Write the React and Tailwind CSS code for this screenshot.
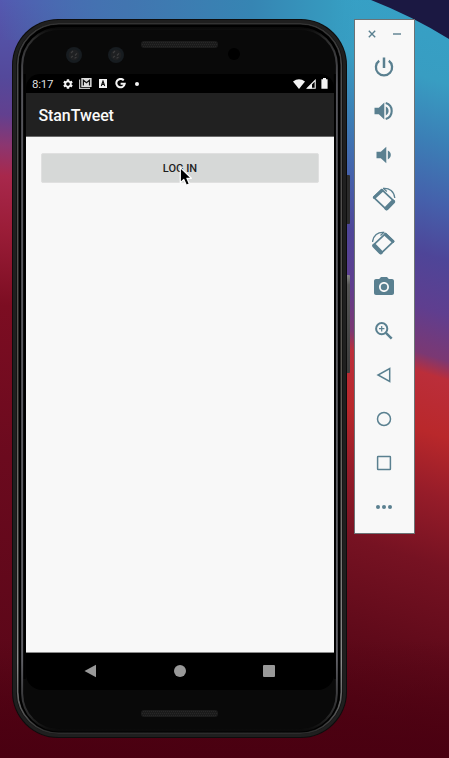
import React from "react";
import { MdSettings, MdPhotoCamera } from "react-icons/md";

function Wallpaper() {
  return (
    <svg className="absolute inset-0" width="449" height="758" viewBox="0 0 449 758">
      <defs>
        <linearGradient id="wl" gradientUnits="userSpaceOnUse" x1="0" y1="0" x2="-60" y2="758">
          <stop offset="0" stopColor="#5459b0" />
          <stop offset="0.1" stopColor="#54499b" />
          <stop offset="0.15" stopColor="#62408f" />
          <stop offset="0.19" stopColor="#8c3670" />
          <stop offset="0.23" stopColor="#a8284c" />
          <stop offset="0.3" stopColor="#9b1d38" />
          <stop offset="0.4" stopColor="#7c0d22" />
          <stop offset="0.6" stopColor="#6b0a1e" />
          <stop offset="0.86" stopColor="#5c0719" />
          <stop offset="1" stopColor="#4c0111" />
        </linearGradient>
        <linearGradient id="wr" gradientUnits="userSpaceOnUse" x1="449" y1="0" x2="229" y2="700">
          <stop offset="0" stopColor="#36a1c6" />
          <stop offset="0.11" stopColor="#389dc2" />
          <stop offset="0.19" stopColor="#3b7fb6" />
          <stop offset="0.27" stopColor="#4560ab" />
          <stop offset="0.34" stopColor="#4e4598" />
          <stop offset="0.41" stopColor="#5f3e8f" />
          <stop offset="0.47" stopColor="#7b3873" />
          <stop offset="0.495" stopColor="#bb2e3a" />
          <stop offset="0.57" stopColor="#b9282b" />
          <stop offset="0.65" stopColor="#961c29" />
          <stop offset="0.74" stopColor="#761222" />
          <stop offset="0.86" stopColor="#600a1a" />
          <stop offset="1" stopColor="#4c0212" />
        </linearGradient>
        <linearGradient id="wt" x1="0" y1="0" x2="1" y2="0">
          <stop offset="0" stopColor="#3787b5" stopOpacity="0" />
          <stop offset="0.35" stopColor="#4275b0" />
          <stop offset="0.7" stopColor="#3685b3" />
          <stop offset="0.92" stopColor="#369abf" />
          <stop offset="1" stopColor="#369fc4" stopOpacity="0" />
        </linearGradient>
        <linearGradient id="wb" x1="0" y1="0" x2="0" y2="1">
          <stop offset="0" stopColor="#4c0211" stopOpacity="0" />
          <stop offset="1" stopColor="#4a0011" />
        </linearGradient>
      </defs>
      <rect width="180" height="758" fill="url(#wl)" />
      <rect x="180" width="269" height="758" fill="url(#wr)" />
      <rect width="360" height="40" fill="url(#wt)" />
      <rect y="640" width="449" height="118" fill="url(#wb)" />
      <path d="M371 0Q412 16 449 39V0Z" fill="#1b1842" />
    </svg>
  );
}

function Bezel() {
  return (
    <svg className="absolute inset-0" width="335" height="719" viewBox="0 0 335 719" fill="none">
      <defs>
        <linearGradient id="bz1" x1="0" y1="0" x2="0" y2="1">
          <stop offset="0" stopColor="#333333" />
          <stop offset="0.08" stopColor="#4b4b4d" />
          <stop offset="0.5" stopColor="#57544f" />
          <stop offset="0.9" stopColor="#8a8a8a" />
          <stop offset="0.97" stopColor="#555555" />
          <stop offset="1" stopColor="#2c2c2c" />
        </linearGradient>
        <linearGradient id="bz2" x1="0" y1="0" x2="0" y2="1">
          <stop offset="0" stopColor="#0a0a0a" />
          <stop offset="0.015" stopColor="#2c2c2c" />
          <stop offset="0.08" stopColor="#55555b" />
          <stop offset="0.9" stopColor="#606066" />
          <stop offset="0.98" stopColor="#262626" />
          <stop offset="1" stopColor="#0a0a0a" />
        </linearGradient>
      </defs>
      <rect x="2.5" y="2.5" width="330" height="714" rx="44" stroke="#1f1f1f" strokeWidth="3" />
      <rect x="5.7" y="4.7" width="323.6" height="709.6" rx="41" stroke="url(#bz1)" strokeWidth="1.6" />
      <rect x="8" y="7" width="319" height="705" rx="39" stroke="#000" strokeWidth="2.4" />
      <rect x="10.2" y="9.4" width="314.6" height="702" rx="37" stroke="url(#bz2)" strokeWidth="2" />
      <rect x="11.5" y="11" width="312" height="699" rx="36" fill="#090909" />
      <path d="M12.7 55V660M322.8 55V660" stroke="#000" strokeWidth="2" />
    </svg>
  );
}

function Lens() {
  return (
    <svg width="16" height="16" viewBox="0 0 16 16">
      <circle cx="8" cy="8" r="8" fill="#171c20" />
      <circle cx="8" cy="8" r="5.4" fill="#1f2022" />
      <path d="M5 6l2-2M9 8.5l2-2.2M5 10.5l2-1.5M8.5 11.3l2-1" stroke="#3d3d3e" strokeWidth="1.2" />
    </svg>
  );
}

function Grille() {
  return (
    <div className="flex h-[7px] w-[77px] items-center justify-center overflow-hidden rounded-[3px] bg-[#1b1b1b]">
      <svg width="77" height="7" viewBox="0 0 77 7">
        <path d="M2 1.5H75M1 3.5H76M2 5.5H75" stroke="#272727" strokeWidth="1" strokeDasharray="1 1" />
      </svg>
    </div>
  );
}

function StatusBar() {
  return (
    <div className="flex h-[19px] items-center rounded-t-[14px] bg-black pl-[6px] pr-[6px] text-[#f4f4f4]">
      <span className="w-[30px] pt-[1px] text-[11.5px] leading-[18px] tracking-[-0.2px] text-[#dedede]">8:17</span>
      <MdSettings size={12} />
      <svg className="ml-[5px]" width="13" height="11" viewBox="0 0 13 11">
        <path d="M.6 1.5V10.4H11" fill="none" stroke="#bdbdbd" strokeWidth="1.2" />
        <path d="M2.3 0H12.6V9H2.3Z" fill="#dddddd" />
        <path d="M4.4 7.4V2.2L7.45 4.8L10.5 2.2V7.4" fill="none" stroke="#111" strokeWidth="1.2" />
      </svg>
      <span className="ml-[7px] flex h-[9px] w-[8px] items-center justify-center bg-[#f4f4f4]">
        <svg width="6" height="7" viewBox="0 0 6 7">
          <path d="M1.3 6L3 1L4.7 6M1.8 4.4H4.2" fill="none" stroke="#111" strokeWidth="1.1" />
        </svg>
      </span>
      <svg className="ml-[8px]" width="11" height="11" viewBox="0 0 11 11" fill="none">
        <path d="M8.7 2.3A4.2 4.2 0 1 0 9.7 5.8H5.6" stroke="currentColor" strokeWidth="2" />
      </svg>
      <span className="ml-[9px] size-[4px] rounded-full bg-[#f4f4f4]" />
      <div className="ml-auto flex items-center">
        <svg width="12" height="10" viewBox="0 0 12 10">
          <path d="M0 2.4Q6-2 12 2.4L6 10Z" fill="currentColor" />
        </svg>
        <svg className="ml-[1px]" width="10" height="10" viewBox="0 0 10 10">
          <path d="M1.3 9.3H9.2V1.3Z" fill="none" stroke="currentColor" strokeWidth="1.1" />
          <path d="M1 9.5L6 4.5V9.5Z" fill="currentColor" />
        </svg>
        <svg className="ml-[5px]" width="7" height="11" viewBox="0 0 7 11">
          <path d="M2 0H5V1.2H6.6V10.8H.4V1.2H2Z" fill="currentColor" />
        </svg>
      </div>
    </div>
  );
}

function NavBar() {
  return (
    <div className="flex h-[37px] items-center rounded-b-[16px] bg-black pb-[1px] pl-[58px] pr-[59px] text-[#999999]">
      <svg width="13" height="14" viewBox="0 0 13 14">
        <path d="M.5 7L12 .7V13.3Z" fill="currentColor" />
      </svg>
      <span className="ml-auto size-[12px] rounded-full bg-[#999999]" />
      <span className="ml-auto size-[12px] rounded-[1px] bg-[#999999]" />
    </div>
  );
}

function Phone() {
  return (
    <div className="relative ml-[12px] mt-[19px] h-[719px] w-[335px] rounded-[46px] bg-[#0d0d0d]">
      <Bezel />
      <span className="absolute left-[335px] top-[156px] h-[49px] w-[3px] rounded-r-[1px] bg-[#2b2b2b]" />
      <span className="absolute left-[335px] top-[256px] h-[98px] w-[3px] rounded-r-[1px] bg-linear-to-b from-[#8a8a8a] via-[#555555] via-10% to-[#3c3c3c]" />
      <div className="relative flex h-full flex-col px-[14px]">
        <div className="flex h-[55px]">
          <div className="ml-[40px] mt-[28px]"><Lens /></div>
          <div className="ml-[26px] mt-[28px]"><Lens /></div>
          <div className="ml-[17px] mt-[22px]"><Grille /></div>
          <span className="ml-[10px] mt-[29px] size-[12px] rounded-full bg-black" />
        </div>
        <div className="flex h-[616px] w-[308px] flex-col">
          <StatusBar />
          <div className="flex h-[44px] items-center border-b border-[#6a6a6a] bg-[#212121] pl-[12.5px] pt-[3px] text-[16px] font-medium tracking-[-0.1px] text-[#fafafa]">
            StanTweet
          </div>
          <div className="flex-1 border-b border-[#8b8b8b] bg-[#f8f8f8] px-[15px] pt-[16px]">
            <button className="flex h-[30px] w-full items-center justify-center rounded-[2px] border border-[#e0e0e0] bg-[#d6d8d7] pt-[2px] text-[11px] font-medium text-[#1e1e1e]">
              LOG IN
            </button>
          </div>
          <NavBar />
        </div>
        <div className="flex h-[48px] justify-center pr-[1px] pt-[20px]"><Grille /></div>
      </div>
    </div>
  );
}

function RotateIcon({ flip }) {
  return (
    <svg width="24" height="24" viewBox="0 0 24 24" fill="none" stroke="currentColor">
      <g transform={flip ? "translate(23.3 0) scale(-1 1)" : undefined}>
        <path d="M9.8 2.6L22 14.2L14.3 22.3L1.7 10.4Z" strokeWidth="1.7" strokeLinejoin="round" />
        <path d="M9.9 3.5L2.5 10.4" strokeWidth="3.2" strokeLinecap="round" />
        <path d="M20.9 14.8L14.6 21.2" strokeWidth="4.4" strokeLinecap="round" />
        <path d="M11 1.4C17.5.6 22.2 4.8 22.8 11" strokeWidth="1.3" />
        <path d="M11.3 1.3L14.8 4.4" strokeWidth="1.3" />
      </g>
    </svg>
  );
}

function PowerIcon() {
  return (
    <svg width="20" height="20" viewBox="0 0 20 20" fill="none" stroke="currentColor">
      <path d="M10 .5V11" strokeWidth="2.5" />
      <path d="M5.2 3.8A8.1 8.1 0 1 0 14.8 3.8" strokeWidth="2.3" />
    </svg>
  );
}

function VolumeUpIcon() {
  return (
    <svg width="20" height="20" viewBox="0 0 20 20">
      <path d="M.5 6.8H4.8L10.3 1.4V18.6L4.8 13.2H.5Z" fill="currentColor" />
      <path d="M11.8 5.6C13.6 6.5 14.6 8.1 14.6 10S13.6 13.5 11.8 14.4Z" fill="currentColor" />
      <path d="M11.7 2.1A8.2 8.2 0 0 1 11.7 17.9" fill="none" stroke="currentColor" strokeWidth="2.1" />
    </svg>
  );
}

function VolumeDownIcon() {
  return (
    <svg width="16" height="18" viewBox="0 0 16 18">
      <path d="M.5 5.8H4.8L10.3 .7V17.3L4.8 12.2H.5Z" fill="currentColor" />
      <path d="M11.8 4.6C13.7 5.6 14.8 7.1 14.8 9S13.7 12.5 11.8 13.4Z" fill="currentColor" />
    </svg>
  );
}

function ZoomIcon() {
  return (
    <svg width="18" height="18" viewBox="0 0 18 18" fill="none" stroke="currentColor">
      <circle cx="6.7" cy="6.7" r="5.6" strokeWidth="2" />
      <path d="M6.7 4V9.4M4 6.7H9.4" strokeWidth="1.2" />
      <path d="M10.9 10.9L16.7 16.7" strokeWidth="2.4" />
    </svg>
  );
}

const tools = [
  { id: "power", icon: <PowerIcon /> },
  { id: "volume-up", icon: <VolumeUpIcon /> },
  { id: "volume-down", icon: <VolumeDownIcon /> },
  { id: "rotate-left", icon: <RotateIcon /> },
  { id: "rotate-right", icon: <RotateIcon flip /> },
  { id: "camera", icon: <MdPhotoCamera size={24} /> },
  { id: "zoom", icon: <ZoomIcon /> },
  {
    id: "back",
    icon: (
      <svg width="16" height="16" viewBox="0 0 16 16" fill="none" stroke="currentColor" strokeWidth="1.5">
        <path d="M13.7 1.5V14.5L2 8Z" />
      </svg>
    ),
  },
  {
    id: "home",
    icon: (
      <svg width="16" height="16" viewBox="0 0 16 16" fill="none" stroke="currentColor" strokeWidth="1.5">
        <circle cx="8" cy="8" r="6.5" />
      </svg>
    ),
  },
  {
    id: "overview",
    icon: (
      <svg width="16" height="16" viewBox="0 0 16 16" fill="none" stroke="currentColor" strokeWidth="1.5">
        <rect x="1.6" y="1.6" width="12.8" height="12.8" rx="0.5" />
      </svg>
    ),
  },
  {
    id: "more",
    icon: (
      <svg width="16" height="4" viewBox="0 0 16 4" fill="currentColor">
        <circle cx="2" cy="2" r="2" />
        <circle cx="8" cy="2" r="2" />
        <circle cx="14" cy="2" r="2" />
      </svg>
    ),
  },
];

function Toolbar() {
  return (
    <div className="relative ml-[7px] mt-[19px] flex h-[515px] w-[61px] flex-col border border-[#6c7275] bg-[#f8f8f8] text-[#5a8090]">
      <div className="flex h-[25px] items-center pl-[13px] pt-[3px]">
        <svg width="8" height="8" viewBox="0 0 8 8">
          <path d="M.8.8L7.2 7.2M7.2.8L.8 7.2" stroke="currentColor" strokeWidth="1.4" />
        </svg>
        <span className="ml-[17px] h-[1.5px] w-[8px] bg-[#8aa3ae]" />
      </div>
      {tools.map((t) => (
        <div key={t.id} className="flex h-[44px] items-center justify-center pr-[1px]">
          {t.icon}
        </div>
      ))}
    </div>
  );
}

export default function App() {
  return (
    <div className="relative flex h-[758px] w-[449px] items-start overflow-hidden font-[Roboto,sans-serif]">
      <Wallpaper />
      <Phone />
      <Toolbar />
      <svg className="absolute left-[178px] top-[166px]" width="16" height="22" viewBox="0 0 16 22">
        <path
          d="M2.3 1.6V16.6L5.8 13.4L8.4 19.2L11.4 17.9L8.9 12.3H13.4Z"
          fill="#000"
          stroke="#fff"
          strokeWidth="1.2"
          strokeLinejoin="round"
        />
      </svg>
    </div>
  );
}
